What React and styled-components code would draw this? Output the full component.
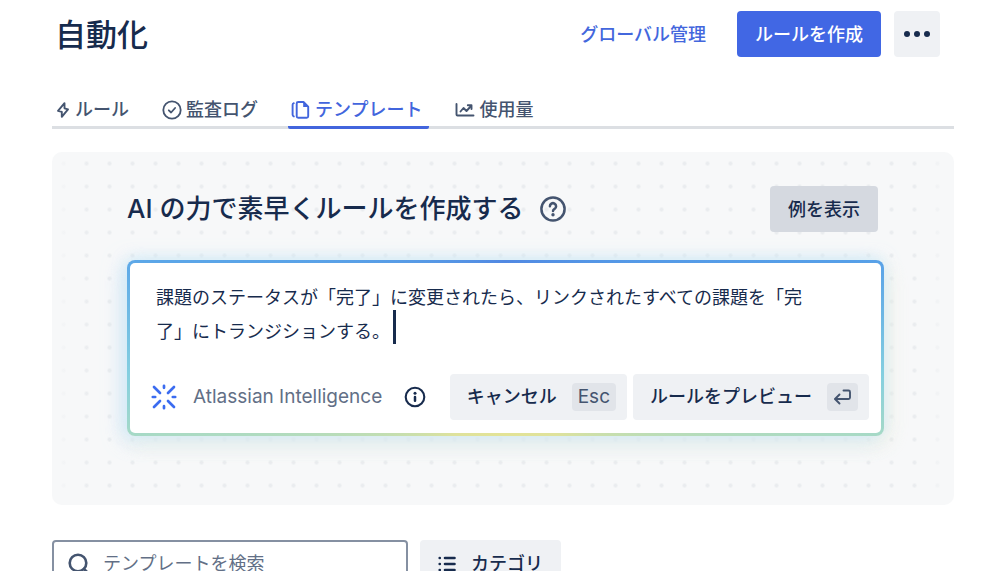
import { useState } from 'react';
import styled, { createGlobalStyle } from 'styled-components';

const GlobalStyle = createGlobalStyle`
  *, *::before, *::after {
    box-sizing: border-box;
  }
  html {
    scrollbar-width: none;
  }
  body {
    margin: 0;
    background: #ffffff;
    color: #172b4d;
    font-family: Inter, "Noto Sans CJK JP", sans-serif;
    font-size: 18px;
    line-height: 24px;
  }
  button, input, textarea {
    font: inherit;
    color: inherit;
    margin: 0;
  }
`;

const BoltIcon = () => (
  <svg width="16" height="20" viewBox="0 0 16 20" fill="none" stroke="currentColor" strokeWidth="1.900" strokeLinejoin="round" aria-hidden="true">
    <path d="M9.500 3.200 3 10.800l3.800 1V16.800L13 9.300l-3.500-1z" />
  </svg>
);

const CheckCircleIcon = () => (
  <svg width="20" height="20" viewBox="0 0 20 20" fill="none" stroke="currentColor" strokeWidth="1.800" strokeLinecap="round" strokeLinejoin="round" aria-hidden="true">
    <circle cx="10" cy="10" r="8.700" />
    <path d="m6.800 10.300 2.300 2.200 4-4.500" />
  </svg>
);

const PagesIcon = () => (
  <svg width="20" height="20" viewBox="0 0 20 20" fill="none" stroke="currentColor" strokeWidth="1.900" strokeLinejoin="round" strokeLinecap="round" aria-hidden="true">
    <path d="M7.500 2h5l4.700 4.700v9.500a1.500 1.500 0 0 1-1.500 1.500H7.200A1.500 1.500 0 0 1 5.700 16.200V3.500A1.500 1.500 0 0 1 7.200 2z" />
    <path d="M12.200 2v5h5z" fill="currentColor" stroke="none" />
    <path d="M2.800 3.200c-.9.300-1.200.8-1.200 1.600v10c0 .8.300 1.300 1.200 1.600" />
  </svg>
);

const ChartIcon = () => (
  <svg width="20" height="20" viewBox="0 0 20 20" fill="none" stroke="currentColor" strokeWidth="1.900" strokeLinecap="round" strokeLinejoin="round" aria-hidden="true">
    <path d="M1.500 4v10.500a1 1 0 0 0 1 1h16" />
    <path d="m5.500 11.500 3-3.500 3 3 4.500-5" />
    <path d="M12.800 5.300h3.700v3.700" />
  </svg>
);

const HelpIcon = () => (
  <svg width="26" height="26" viewBox="0 0 26 26" fill="none" stroke="currentColor" strokeWidth="2.500" strokeLinecap="round" aria-hidden="true">
    <circle cx="13" cy="13" r="11.600" />
    <path d="M9.900 10.300a3.100 3.100 0 1 1 4.700 2.600c-1 .6-1.600 1.100-1.600 2.200" />
    <circle cx="13" cy="18.700" r="1.700" fill="currentColor" stroke="none" />
  </svg>
);

const SparkIcon = () => (
  <svg width="26" height="26" viewBox="0 0 26 26" fill="none" stroke="#3b6cf0" strokeWidth="2.700" strokeLinecap="round" aria-hidden="true">
    <path d="M13 1.800v2M13 22.200v2M1.800 13h2.400M21.800 13h2.400" />
    <path d="m3 3 6 6M17 17l6 6M23 3l-6 6M9 17l-6 6" />
  </svg>
);

const InfoIcon = () => (
  <svg width="22" height="22" viewBox="0 0 22 22" fill="none" stroke="currentColor" strokeWidth="2.100" strokeLinecap="round" aria-hidden="true">
    <circle cx="11" cy="11" r="9.300" />
    <path d="M11 11v3.800" strokeWidth="2.500" />
    <circle cx="11" cy="7.200" r="1.500" fill="currentColor" stroke="none" />
  </svg>
);

const ReturnIcon = () => (
  <svg width="19" height="18" viewBox="0 0 19 18" fill="none" stroke="currentColor" strokeWidth="1.900" strokeLinecap="round" strokeLinejoin="round" aria-hidden="true">
    <path d="M10.500 2.500h5A1.500 1.500 0 0 1 17 4v5.500a1.500 1.500 0 0 1-1.500 1.500H2.500" />
    <path d="M6.500 6.500 2 11l4.500 4.500" />
  </svg>
);

const SearchIcon = () => (
  <svg width="24" height="24" viewBox="0 0 24 24" fill="none" stroke="currentColor" strokeWidth="2.600" strokeLinecap="round" aria-hidden="true">
    <circle cx="11" cy="11" r="8.300" />
    <path d="m17 17 4.500 4.500" />
  </svg>
);

const ListIcon = () => (
  <svg width="18" height="18" viewBox="0 0 18 18" fill="none" stroke="currentColor" strokeWidth="2.600" strokeLinecap="round" aria-hidden="true">
    <path d="M7 3h9.500M7 9h9.500M7 15h9.500M1.700 3h.1M1.700 9h.1M1.700 15h.1" />
  </svg>
);

const MoreIcon = () => (
  <svg width="28" height="8" viewBox="0 0 28 8" fill="currentColor" aria-hidden="true">
    <circle cx="4" cy="4" r="3" />
    <circle cx="14" cy="4" r="3" />
    <circle cx="24" cy="4" r="3" />
  </svg>
);

const TABS = [
  { id: 'rules', label: 'ルール', Icon: BoltIcon },
  { id: 'audit', label: '監査ログ', Icon: CheckCircleIcon },
  { id: 'templates', label: 'テンプレート', Icon: PagesIcon },
  { id: 'usage', label: '使用量', Icon: ChartIcon },
];

export default function App() {
  const [tab, setTab] = useState('templates');
  const [prompt, setPrompt] = useState(
    '課題のステータスが「完了」に変更されたら、リンクされたすべての課題を「完了」にトランジションする。'
  );

  return (
    <>
      <GlobalStyle />
      <Page>
        <Header>
          <Title>自動化</Title>
          <Actions>
            <GlobalLink href="#global">グローバル管理</GlobalLink>
            <Button $kind="primary">ルールを作成</Button>
            <IconButton aria-label="その他">
              <MoreIcon />
            </IconButton>
          </Actions>
        </Header>

        <Tabs role="tablist">
          {TABS.map(({ id, label, Icon }) => (
            <Tab key={id} role="tab" aria-selected={tab === id} $active={tab === id} onClick={() => setTab(id)}>
              <Icon />
              {label}
            </Tab>
          ))}
        </Tabs>

        <Panel>
          <PanelHeader>
            <PanelTitle>AI の力で素早くルールを作成する</PanelTitle>
            <HelpButton aria-label="ヘルプ">
              <HelpIcon />
            </HelpButton>
            <Button $kind="muted">例を表示</Button>
          </PanelHeader>

          <Composer>
            <PromptBox>
              <Prompt aria-label="プロンプト" rows={2} value={prompt} onChange={(e) => setPrompt(e.target.value)} />
              <Caret />
            </PromptBox>
            <ComposerFooter>
              <Brand>
                <SparkIcon />
                Atlassian Intelligence
              </Brand>
              <InfoButton aria-label="情報">
                <InfoIcon />
              </InfoButton>
              <FooterButtons>
                <Button $keyed>
                  キャンセル
                  <Key>Esc</Key>
                </Button>
                <Button $keyed>
                  ルールをプレビュー
                  <Key>
                    <ReturnIcon />
                  </Key>
                </Button>
              </FooterButtons>
            </ComposerFooter>
          </Composer>
        </Panel>

        <Filters>
          <Search>
            <SearchIcon />
            <SearchInput type="search" aria-label="テンプレートを検索" placeholder="テンプレートを検索" />
          </Search>
          <Button>
            <ListIcon />
            カテゴリ
          </Button>
        </Filters>
      </Page>
    </>
  );
}

const Page = styled.main`
  padding: 11px 46px 24px 52px;
`;

const Header = styled.header`
  display: flex;
  align-items: center;
  justify-content: space-between;
  padding: 0 14px 0 3px;
`;

const Title = styled.h1`
  margin: 0;
  padding-top: 2px;
  font-size: 31px;
  line-height: 44px;
  font-weight: 500;
`;

const Actions = styled.div`
  display: flex;
  align-items: center;
  gap: 13px;
`;

const GlobalLink = styled.a`
  margin-right: 18px;
  padding-top: 2px;
  color: #4367dd;
  font-weight: 500;
  text-decoration: none;
`;

const kinds = {
  primary: { background: '#4167e4', color: '#ffffff' },
  muted: { background: '#d5d9e0', color: '#172b4d' },
  subtle: { background: '#eff1f4', color: '#172b4d' },
};

const Button = styled.button`
  display: inline-flex;
  align-items: center;
  gap: 15px;
  height: 46px;
  padding: ${(p) => (p.$keyed ? '0 11px 0 17px' : '2px 18px 0')};
  border: 0;
  border-radius: 4px;
  background: ${(p) => kinds[p.$kind || 'subtle'].background};
  color: ${(p) => kinds[p.$kind || 'subtle'].color};
  font-weight: 500;
  white-space: nowrap;
  cursor: pointer;
`;

const IconButton = styled(Button)`
  width: 46px;
  padding: 0;
  justify-content: center;
`;

const Tabs = styled.div`
  display: flex;
  gap: 23px;
  margin-top: 32px;
  box-shadow: inset 0 -3px #dcdfe3;
`;

const Tab = styled.button`
  display: flex;
  align-items: center;
  gap: 4px;
  height: 40px;
  padding: 4px 7px 0 3px;
  border: 0;
  border-bottom: 3px solid ${(p) => (p.$active ? '#4265dd' : 'transparent')};
  border-radius: 2px;
  background: none;
  color: ${(p) => (p.$active ? '#4265dd' : '#44546f')};
  font-weight: 500;
  cursor: pointer;
`;

const Panel = styled.section`
  margin-top: 23px;
  padding: 34px 70px 69px 75px;
  border-radius: 10px;
  background:
    linear-gradient(90deg, #f7f8f9, #f7f8f900 40px, #f7f8f900 calc(100% - 40px), #f7f8f9),
    radial-gradient(circle, #eaecef 1px, #eaecef00 3px) 0 0 / 23px 23px,
    #f7f8f9;
`;

const PanelHeader = styled.div`
  display: flex;
  align-items: center;
  padding-right: 6px;

  ${Button} {
    margin-left: auto;
  }
`;

const PanelTitle = styled.h2`
  margin: 0;
  font-size: 26px;
  line-height: 46px;
  font-weight: 500;
`;

const PlainButton = styled.button`
  display: flex;
  padding: 0;
  border: 0;
  background: none;
  cursor: pointer;
`;

const HelpButton = styled(PlainButton)`
  margin-left: 17px;
  color: #44546f;
`;

const InfoButton = styled(PlainButton)`
  margin-left: 22px;
`;

const Composer = styled.div`
  margin-top: 28px;
  padding: 18px 12px 13px 21px;
  border: 3px solid transparent;
  border-radius: 8px;
  background:
    linear-gradient(#ffffff, #ffffff) padding-box,
    conic-gradient(
      #5188e2,
      #569fe8 76deg,
      #84cfe0 94deg,
      #a9dac4 104deg,
      #dfe29c 150deg,
      #e3e396 180deg,
      #dfe29c 210deg,
      #a9dac4 256deg,
      #84cfe0 266deg,
      #5ba6e8 284deg,
      #5188e2
    ) border-box;
  box-shadow:
    0 -2px 14px #c8ecfa88,
    -4px 2px 20px #c3dffb99,
    6px 8px 20px #f7f3de99,
    -4px 10px 20px #d8eef666;
`;

const PromptBox = styled.div`
  position: relative;
  padding: 0 60px 0 5px;
`;

const Prompt = styled.textarea`
  display: block;
  width: 100%;
  height: 68px;
  padding: 0;
  border: 0;
  outline: none;
  resize: none;
  overflow: hidden;
  background: none;
  line-height: 34px;
  caret-color: transparent;
`;

const Caret = styled.span`
  position: absolute;
  left: 242px;
  top: 29px;
  width: 3px;
  height: 34px;
  background: #172b4d;
`;

const ComposerFooter = styled.div`
  display: flex;
  align-items: center;
  margin-top: 25px;
`;

const Brand = styled.span`
  display: flex;
  align-items: center;
  gap: 16px;
  color: #626f86;
  font-size: 19px;
  white-space: nowrap;
`;

const FooterButtons = styled.div`
  display: flex;
  gap: 6px;
  margin-left: auto;
`;

const Key = styled.kbd`
  display: inline-flex;
  align-items: center;
  justify-content: center;
  height: 28px;
  padding: 0 6px;
  border-radius: 4px;
  background: #e1e4e9;
  color: #44546f;
  font-family: inherit;
  font-size: 19px;
  font-weight: 400;
`;

const Filters = styled.div`
  display: flex;
  gap: 12px;
  margin-top: 35px;
`;

const Search = styled.label`
  display: flex;
  align-items: center;
  gap: 12px;
  flex: 0 1 356px;
  height: 46px;
  padding: 2px 13px 0;
  border: 2px solid #8590a2;
  border-radius: 4px;
  color: #44546f;
`;

const SearchInput = styled.input`
  flex: 1;
  min-width: 0;
  padding: 0;
  border: 0;
  outline: none;
  background: none;

  &::placeholder {
    color: #626f86;
    opacity: 1;
  }
`;
